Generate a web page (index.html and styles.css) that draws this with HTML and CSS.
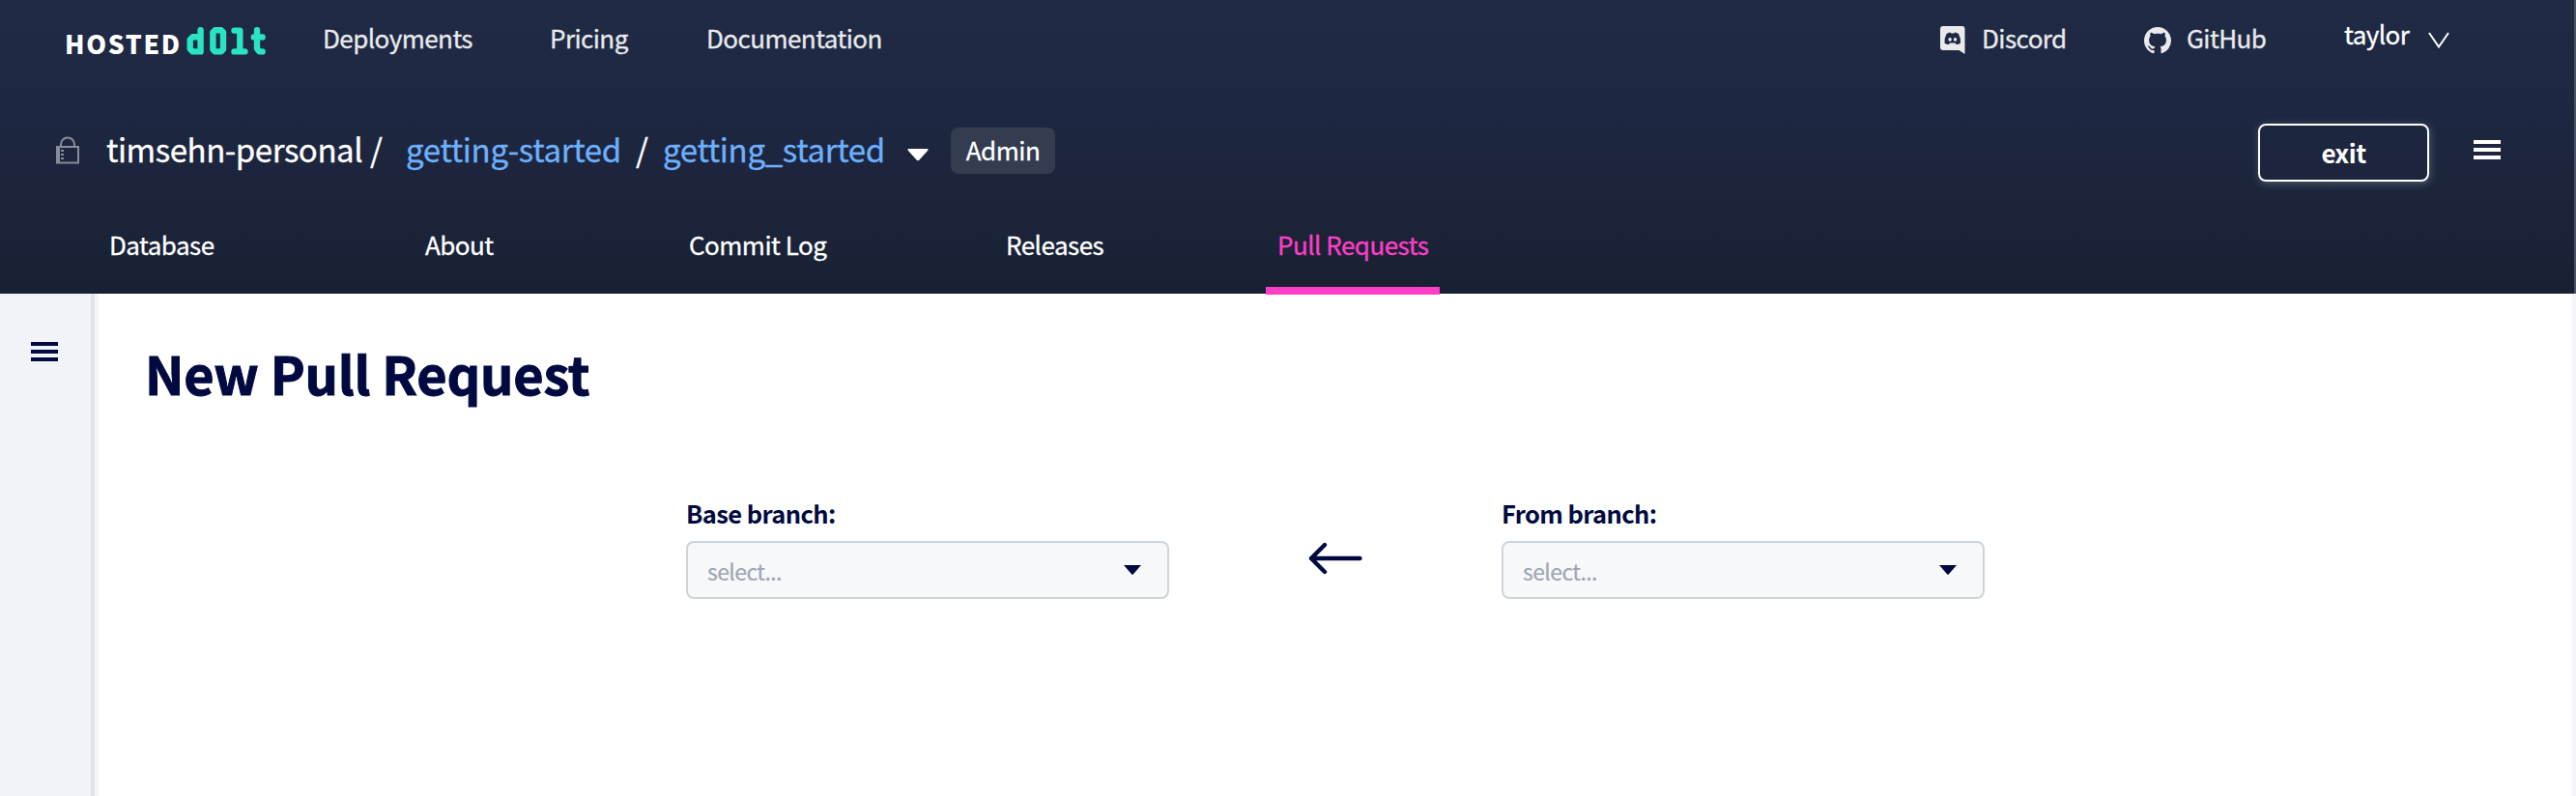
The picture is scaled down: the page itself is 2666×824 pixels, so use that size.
FILE: index.html
```
<!DOCTYPE html>
<html lang="en">
<head>
<meta charset="utf-8">
<title>New Pull Request</title>
<link rel="stylesheet" href="styles.css">
</head>
<body>
<header class="header">
  <nav class="topnav">
    <a class="logo"><span class="logo-hosted">HOSTED</span>
      <svg class="logo-dolt" viewBox="0 0 82 29" width="82" height="29" fill="none" stroke="#29e3c1" stroke-width="6.400" stroke-linecap="round" stroke-linejoin="round"><path d="M14.600 3.200V25.400H6.500L3.700 22.600V13L6.500 10.200H14.600M29.600 3.200H35.800L38 5.500V23L35.800 25.400H29.600L27.400 23V5.500ZM49.500 3.600H55.300V25.400M49.500 25.400H60.400M73 3.200V22.500L75.500 25.400H78.600M69.800 10.400H78.600"/></svg>
    </a>
    <a class="nav-link deployments">Deployments</a>
    <a class="nav-link pricing">Pricing</a>
    <a class="nav-link docs">Documentation</a>
    <span class="spacer"></span>
    <a class="nav-link discord"><svg width="26" height="29" viewBox="0 0 26 29"><path fill="#e9eaec" d="M3 0H22.500Q25.500 0 25.500 3V29L19.500 25H3Q0 25 0 22V3Q0 0 3 0Z"/><path fill="#202943" d="M6.500 8Q8.500 6.500 10.500 6.500L11.200 7.500H14.300L15 6.500Q17 6.500 19 8Q21.500 13 21 17.500Q19 19.200 16.500 19L15.500 17.500H10L9 19Q6.500 19.200 4.500 17.500Q4 13 6.500 8Z"/><ellipse cx="10.100" cy="13.800" rx="1.700" ry="1.900" fill="#e9eaec"/><ellipse cx="15.500" cy="13.800" rx="1.700" ry="1.900" fill="#e9eaec"/></svg>Discord</a>
    <a class="nav-link github"><svg width="28" height="28" viewBox="0 0 16 16"><path fill="#e9eaec" d="M8 0C3.580 0 0 3.580 0 8c0 3.540 2.290 6.530 5.470 7.590.4.070.55-.17.55-.38 0-.19-.01-.82-.01-1.490-2.010.37-2.530-.49-2.690-.94-.09-.23-.48-.94-.82-1.130-.28-.15-.68-.52-.01-.53.63-.01 1.080.58 1.230.82.72 1.210 1.870.87 2.330.66.07-.52.28-.87.51-1.070-1.780-.2-3.640-.89-3.640-3.950 0-.87.31-1.590.82-2.150-.08-.2-.36-1.020.08-2.120 0 0 .67-.21 2.200.82.64-.18 1.320-.27 2-.27s1.360.09 2 .27c1.530-1.040 2.200-.82 2.200-.82.44 1.100.16 1.920.08 2.120.51.56.82 1.270.82 2.150 0 3.070-1.870 3.750-3.650 3.950.29.25.54.73.54 1.480 0 1.070-.01 1.930-.01 2.200 0 .21.15.46.55.38A8.010 8.010 0 0 0 16 8c0-4.420-3.580-8-8-8z"/></svg>GitHub</a>
    <a class="nav-link user">taylor<svg width="22" height="17" viewBox="0 0 22 17" fill="none" stroke="#fff" stroke-width="2"><path d="M1 1L11 15.500L21 1"/></svg></a>
  </nav>
  <div class="crumbs">
    <svg class="lock" width="24" height="29" viewBox="0 0 24 29"><path fill="none" stroke="#888d9b" stroke-width="2" d="M5 11V8.500a7 7 0 0 1 14 0V11M1 11H23V27.500H1Z"/><path fill="#888d9b" d="M1 11H4V28H1ZM5 14h3v2H5ZM5 18h3v2H5ZM5 22h3v2H5Z"/></svg>
    <span class="crumb owner">timsehn-personal</span><span class="crumb slash1">/</span>
    <a class="crumb link dep">getting-started</a><span class="crumb slash2">/</span>
    <a class="crumb link db">getting_started</a>
    <svg class="crumb-caret" width="22" height="13" viewBox="0 0 22 13"><path fill="#fff" d="M1.500 0H20.500Q22.500 .5 21 2L12.500 11.500Q11 13 9.500 11.500L1 2Q-.5 .5 1.500 0Z"/></svg>
    <span class="badge">Admin</span>
    <span class="spacer"></span>
    <button class="exit">exit</button>
    <span class="burger light"><i></i><i></i><i></i></span>
  </div>
  <nav class="tabs">
    <a class="tab t1">Database</a><a class="tab t2">About</a><a class="tab t3">Commit Log</a><a class="tab t4">Releases</a><a class="tab t5 active">Pull Requests</a>
  </nav>
</header>
<div class="body">
  <aside class="side"><span class="burger dark"><i></i><i></i><i></i></span></aside>
  <main class="main">
    <h1 class="title">New Pull Request</h1>
    <div class="branches">
      <div class="field"><label class="label base">Base branch:</label>
        <div class="select"><span class="placeholder">select...</span><svg width="18" height="10" viewBox="0 0 18 10"><path fill="#000a40" d="M0 0H18L10 9.300Q9 10.300 8 9.300Z"/></svg></div></div>
      <svg class="arrow" width="56" height="34" viewBox="0 0 56 34" fill="none" stroke="#000a40" stroke-width="4.400" stroke-linecap="round" stroke-linejoin="round"><path d="M53.500 17H3M17 3L3 17L17 31"/></svg>
      <div class="field"><label class="label from">From branch:</label>
        <div class="select"><span class="placeholder">select...</span><svg width="18" height="10" viewBox="0 0 18 10"><path fill="#000a40" d="M0 0H18L10 9.300Q9 10.300 8 9.300Z"/></svg></div></div>
    </div>
  </main>
  <div class="gutter"></div>
</div>
</body>
</html>
```
FILE: styles.css
```
* { box-sizing: border-box; }
body { margin: 0; width: 2666px; height: 824px; overflow: hidden; display: flex; flex-direction: column; background: #fff; color: #000a40; font-family: "Noto Sans CJK SC", "Noto Sans", sans-serif; }
svg { display: block; flex: none; }
.spacer { flex: 1; }
.header { height: 304px; flex: none; background: linear-gradient(#202a45 0, #1f2843 90px, #182133 304px); border-right: 2px solid #4b5263; color: #fff; display: flex; flex-direction: column; }
.topnav { height: 80px; display: flex; align-items: center; padding-left: 67px; white-space: nowrap; }
.logo { display: flex; width: 267px; align-items: center; }
.logo-hosted { width: 126px; font-size: 26.5px; line-height: 30px; font-weight: 900; letter-spacing: 1.7px; padding-top: 10px; }
.logo-dolt { margin-top: 4px; }
.nav-link { font-size: 26px; line-height: 40px; letter-spacing: -.55px; color: #e9eaec; display: flex; align-items: center; padding-bottom: 2px; -webkit-text-stroke: .3px; }
.nav-link svg { margin-top: 5px; }
.deployments { width: 235px; }
.pricing { width: 162px; }
.discord { width: 211px; gap: 17px; }
.github { width: 207px; gap: 16px; }
.user { width: 238px; gap: 20px; color: #fff; padding-bottom: 10px; }
.nav-link.user svg { margin-top: 12px; }
.crumbs { height: 120px; display: flex; align-items: center; padding: 32px 76px 0 58px; white-space: nowrap; }
.lock { width: 24px; margin: 0 28px 2px 0; }
.crumb { font-size: 33px; line-height: 48px; letter-spacing: -.33px; padding-bottom: 4px; -webkit-text-stroke: .3px; }
.owner { width: 273px; letter-spacing: -.45px; }
.slash1 { width: 37px; }
.dep { width: 238px; }
.slash2 { width: 28px; }
.db { width: 253px; }
.link { color: #6db0fc; }
.crumb-caret { margin: 8px 23px 0 0; }
.badge { width: 108px; height: 48px; border-radius: 8px; background: #343c50; font-size: 26px; line-height: 46px; text-align: center; letter-spacing: -.5px; -webkit-text-stroke: .3px; }
.exit { width: 177px; height: 60px; margin: 4px 46px 0 0; border: 2px solid #fff; border-radius: 8px; background: transparent; box-shadow: 1px 2px 8px #4b5e66; color: #fff; font: bold 26px/52px "Noto Sans CJK SC", sans-serif; letter-spacing: -.5px; padding: 0; }
.burger { display: grid; gap: 4px; width: 28px; }
.light { margin-bottom: 2px; }
.burger i { height: 4px; background: currentColor; }
.tabs { height: 104px; display: flex; padding: 25px 0 0 113px; white-space: nowrap; }
.tab { font-size: 26px; line-height: 56px; height: 80px; letter-spacing: -.52px; -webkit-text-stroke: .3px; }
.t1 { width: 327px; }
.t2 { width: 273px; }
.t3 { width: 328px; }
.t4 { width: 269px; }
.active { width: 180px; padding-left: 12px; color: #ff3ec8; border-bottom: 8px solid #ff3ec8; }
.body { flex: 1; display: flex; }
.side { width: 98px; background: #f1f3f9; border-right: 4px solid #dfe3e8; box-shadow: 4px 0 0 #f3f5f8; padding: 50px 0 0 32px; clip-path: inset(0 -4px 0 0); }
.main { flex: 1; padding: 42px 0 0 52px; }
.title { margin: 0; font-size: 54px; line-height: 80px; font-weight: bold; white-space: nowrap; letter-spacing: -.2px; -webkit-text-stroke: 1px; }
.branches { display: flex; margin: 87px 0 0 560px; }
.field { width: 500px; }
.label { display: block; font-size: 25.5px; line-height: 36px; font-weight: bold; letter-spacing: -.6px; margin-bottom: 11px; white-space: nowrap; }
.select { height: 60px; border: 2px solid #cfd4da; border-radius: 8px; background: #f6f8fa; display: flex; justify-content: space-between; align-items: center; padding: 0 27px 0 20px; }
.placeholder { font-size: 23px; line-height: 40px; letter-spacing: -.6px; color: #a0a5b3; padding-top: 1px; -webkit-text-stroke: .2px; }
.arrow { margin: 48px 144px 0 144px; }
.gutter { width: 4px; background: #f3f5fb; }
```
